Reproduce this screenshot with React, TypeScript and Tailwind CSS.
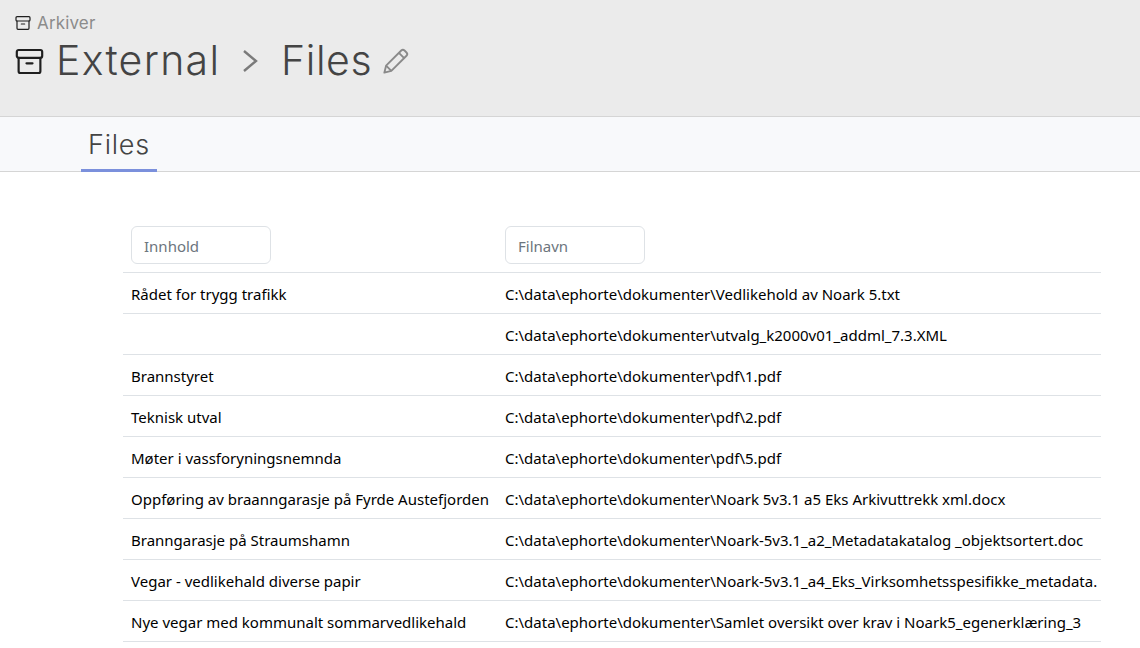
import React from 'react'

const rows = [
  ['Rådet for trygg trafikk', 'C:\\data\\ephorte\\dokumenter\\Vedlikehold av Noark 5.txt'],
  ['', 'C:\\data\\ephorte\\dokumenter\\utvalg_k2000v01_addml_7.3.XML'],
  ['Brannstyret', 'C:\\data\\ephorte\\dokumenter\\pdf\\1.pdf'],
  ['Teknisk utval', 'C:\\data\\ephorte\\dokumenter\\pdf\\2.pdf'],
  ['Møter i vassforyningsnemnda', 'C:\\data\\ephorte\\dokumenter\\pdf\\5.pdf'],
  ['Oppføring av braanngarasje på Fyrde Austefjorden', 'C:\\data\\ephorte\\dokumenter\\Noark 5v3.1 a5 Eks Arkivuttrekk xml.docx'],
  ['Branngarasje på Straumshamn', 'C:\\data\\ephorte\\dokumenter\\Noark-5v3.1_a2_Metadatakatalog _objektsortert.doc'],
  ['Vegar - vedlikehald diverse papir', 'C:\\data\\ephorte\\dokumenter\\Noark-5v3.1_a4_Eks_Virksomhetsspesifikke_metadata.'],
  ['Nye vegar med kommunalt sommarvedlikehald', 'C:\\data\\ephorte\\dokumenter\\Samlet oversikt over krav i Noark5_egenerklæring_3'],
]

const ArchiveIcon = ({ className }: { className: string }) => (
  <svg className={className} viewBox="0 0 24 24" fill="none" stroke="currentColor" strokeWidth="1.8" strokeLinecap="round" strokeLinejoin="round">
    <rect x="1.5" y="2.5" width="21" height="6.5" rx="1.5" />
    <path d="M3 9v11a1.5 1.5 0 0 0 1.5 1.5h15A1.5 1.5 0 0 0 21 20V9" />
    <path d="M9.5 13.5h5" />
  </svg>
)

export default function App() {
  return (
    <div className="h-[648px] overflow-hidden bg-white font-['Noto_Sans',sans-serif] text-[15px]">
      {/* Header */}
      <div className="h-[117px] bg-[#ebebeb] border-b border-[#d5d5d5] pl-[15px] pt-[13px]">
        <div className="flex items-center h-[21px] text-[#8c8c8c] text-[17px] tracking-[0.15px] font-['Inter',sans-serif]">
          <ArchiveIcon className="w-[16px] h-[16px] text-[#1f1f1f] mr-[6px] -translate-y-px" />
          Arkiver
        </div>
        <div className="flex items-center h-[54px] text-[41px] tracking-[0.6px] text-[#444444] font-['Inter',sans-serif] font-light">
          <ArchiveIcon className="w-[29px] h-[29px] text-[#1f1f1f] mr-[12px]" />
          <span className="w-[171px] tracking-[1.3px]">External</span>
          <svg className="w-[16px] h-[24px] ml-[15px] text-[#7a7a7a]" viewBox="0 0 16 24" fill="none" stroke="currentColor" strokeWidth="2.4">
            <path d="M2 2l12 10L2 22" />
          </svg>
          <span className="ml-[23px] w-[101px]">Files</span>
          <svg className="w-[28px] h-[28px] text-[#8a8a8a]" viewBox="0 0 24 24" fill="none" stroke="currentColor" strokeWidth="1.6" strokeLinejoin="round">
            <path d="M2 22l1.5-6L16.5 3a2 2 0 0 1 2.8 0l1.7 1.7a2 2 0 0 1 0 2.8L8 20.5z" />
            <path d="M14.5 5l4.5 4.5" />
            <path d="M3.5 16L8 20.5" />
          </svg>
        </div>
      </div>

      {/* Tabs */}
      <div className="h-[55px] bg-[#f8f9fb] border-b border-[#d5d5d5] pl-[81px]">
        <div className="w-[76px] h-[55px] border-b-[3px] border-[#7b90dc] flex items-center justify-center pt-[4px] text-[27px] tracking-[0.8px] text-[#444444] font-['Inter',sans-serif] font-light">
          Files
        </div>
      </div>

      {/* Table */}
      <div className="ml-[123px] w-[978px] pt-[54px] text-black">
        <div className="flex h-[47px] border-b border-[#dee2e6]">
          <div className="w-[382px] pl-[8px]">
            <div className="w-[140px] h-[38px] border border-[#dee2e6] rounded-[6px] flex items-center pl-[12px] pt-[2px] text-[#6c757d]">Innhold</div>
          </div>
          <div>
            <div className="w-[140px] h-[38px] border border-[#dee2e6] rounded-[6px] flex items-center pl-[12px] pt-[2px] text-[#6c757d]">Filnavn</div>
          </div>
        </div>
        {rows.map(([name, path], i) => (
          <div key={i} className="flex h-[41px] items-center border-b border-[#dee2e6] pt-[2px]">
            <div className="w-[382px] pl-[8px] whitespace-nowrap">{name}</div>
            <div className="flex-1 overflow-hidden whitespace-nowrap">{path}</div>
          </div>
        ))}
      </div>
    </div>
  )
}
